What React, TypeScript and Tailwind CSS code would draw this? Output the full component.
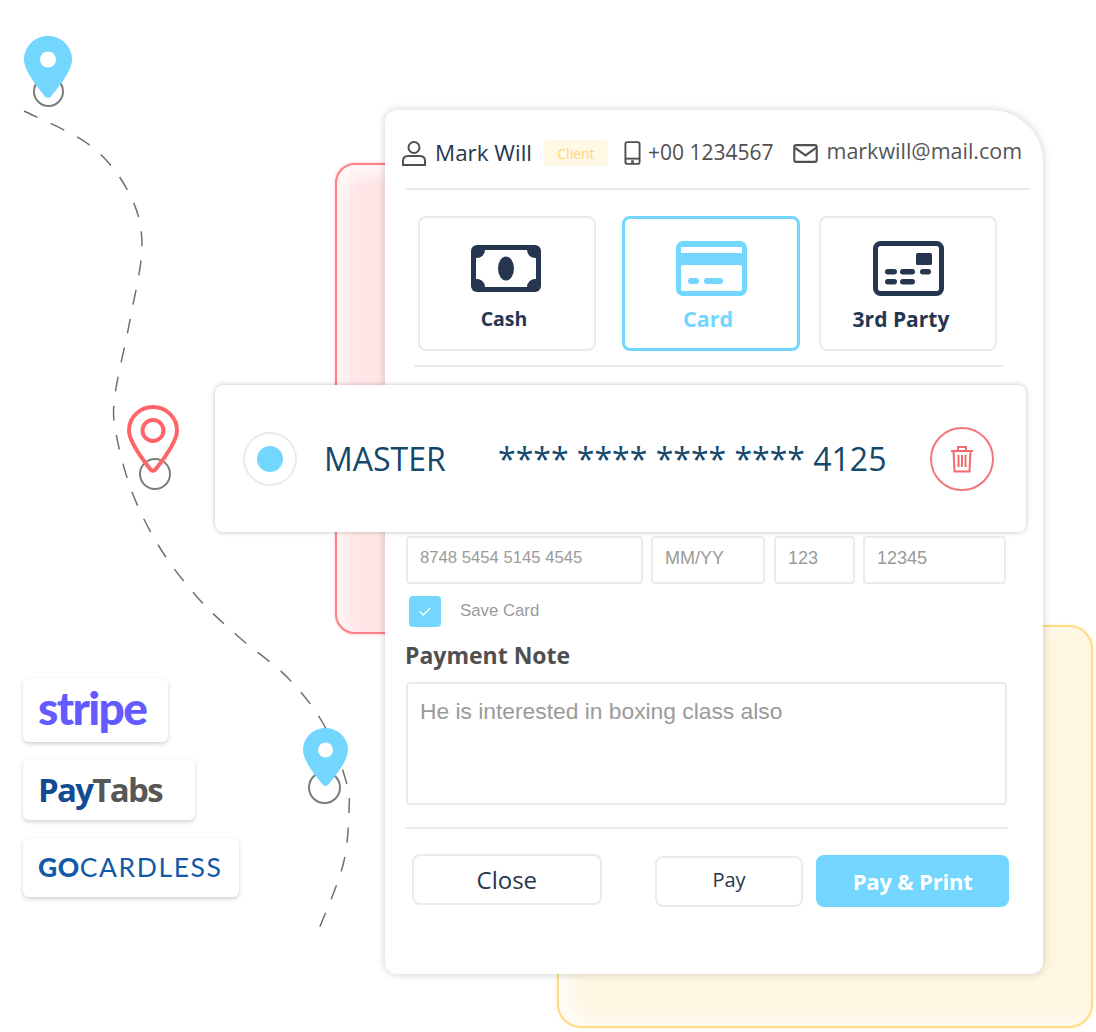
const sans = "font-['Open_Sans','Noto_Sans',sans-serif]";
const arial = "font-['Liberation_Sans',Arial,sans-serif]";

const routePoints: [number, number][] = [
  [24, 111], [91, 146], [129, 193], [142, 245], [130, 320], [115, 395], [116, 433], [132, 492], [160, 548],
  [198, 598], [240, 638], [288, 678], [324, 725], [346, 781], [349, 811], [343, 865], [319, 929],
];

function smoothPath(p: [number, number][]) {
  let d = `M${p[0][0]} ${p[0][1]}`;
  for (let i = 0; i < p.length - 1; i++) {
    const a = p[Math.max(i - 1, 0)];
    const b = p[i];
    const c = p[i + 1];
    const e = p[Math.min(i + 2, p.length - 1)];
    d += `C${b[0] + (c[0] - a[0]) / 6} ${b[1] + (c[1] - a[1]) / 6} ${c[0] - (e[0] - b[0]) / 6} ${c[1] - (e[1] - b[1]) / 6} ${c[0]} ${c[1]}`;
  }
  return d;
}

function Pin({ className, hole }: { className: string; hole: number }) {
  return (
    <svg viewBox="0 0 48 62" className={className}>
      <path fill="#72d6ff" d="M24 0C10.700 0 0 10.500 0 23.600 0 35 14 52 20.800 60.200c1.700 2 4.600 2 6.300 0C34 52 48 35 48 23.600 48 10.500 37.300 0 24 0Z" />
      <circle cx="24" cy="23.500" r={hole} fill="#fff" />
    </svg>
  );
}

function Ring({ className }: { className: string }) {
  return <div className={`absolute rounded-full border-2 border-[#7b7b7b] ${className}`} />;
}

function CashIcon() {
  return (
    <svg viewBox="0 0 70 47" className="h-[47px] w-[70px] -translate-x-[1px]">
      <rect width="70" height="47" rx="6" fill="#26364f" />
      <path fill="#fff" d="M14 5H56A8 8 0 0 0 65 13V34A8 8 0 0 0 56 42H14A8 8 0 0 0 5 34V13A8 8 0 0 0 14 5Z" />
      <ellipse cx="35" cy="23.500" rx="8" ry="12" fill="#26364f" />
    </svg>
  );
}

function CardIcon() {
  return (
    <svg viewBox="0 0 71 55" className="h-[55px] w-[71px]">
      <rect width="71" height="55" rx="7" fill="#72d6ff" />
      <rect x="5" y="6" width="61" height="6" fill="#fff" />
      <rect x="5" y="24" width="61" height="26" rx="2" fill="#fff" />
      <rect x="12" y="37" width="11" height="6" rx="3" fill="#72d6ff" />
      <rect x="28" y="37" width="19" height="6" rx="3" fill="#72d6ff" />
    </svg>
  );
}

function PartyIcon() {
  return (
    <svg viewBox="0 0 71 55" className="h-[55px] w-[71px]">
      <rect x="2.500" y="2.500" width="66" height="50" rx="5" fill="#fff" stroke="#26364f" strokeWidth="5" />
      <rect x="43" y="12" width="16" height="12" rx="1.500" fill="#26364f" />
      <rect x="12" y="28" width="12" height="5.500" rx="2.700" fill="#26364f" />
      <rect x="27" y="28" width="15" height="5.500" rx="2.700" fill="#26364f" />
      <rect x="47" y="28" width="11" height="5.500" rx="2.700" fill="#26364f" />
      <rect x="12" y="38" width="12" height="5.500" rx="2.700" fill="#26364f" />
      <rect x="27" y="38" width="15" height="5.500" rx="2.700" fill="#26364f" />
    </svg>
  );
}

function Method({ label, active, icon, className, labelClass }: { label: string; active?: boolean; icon: React.ReactNode; className: string; labelClass: string }) {
  return (
    <div className={`flex h-[135px] w-[178px] flex-col items-center rounded-lg ${active ? "border-[3px] border-[#72d6ff] pt-[21px]" : "border-2 border-[#ebebeb] pt-[22px]"} ${className}`}>
      <div className="flex h-[56px] items-center">{icon}</div>
      <div className={`leading-[27px] font-bold whitespace-nowrap ${active ? "mt-[8px] text-[#72d6ff]" : "mt-[9px] text-[#26364f]"} ${sans} ${labelClass}`}>{label}</div>
    </div>
  );
}

function Field({ text, className }: { text: string; className: string }) {
  return (
    <div className={`flex h-[48px] items-center rounded border-2 border-[#ebebeb] pb-[4px] pl-[12px] text-[#9a9a9a] ${arial} ${className}`}>{text}</div>
  );
}

export default function App() {
  return (
    <div className="relative h-[1032px] w-[1096px] overflow-hidden bg-white">
      {/* decorative back panels */}
      <div className="absolute left-[335px] top-[163px] h-[471px] w-[200px] rounded-[20px] border-2 border-[#ff8085] bg-[#ffe6e7] shadow-[0_0_3px_rgba(255,120,125,0.5),inset_10px_10px_14px_rgba(255,255,255,0.7)]" />
      <div className="absolute left-[557px] top-[625px] h-[403px] w-[536px] rounded-[24px] border-2 border-[#ffdc85] bg-[#fff6e2] shadow-[0_0_3px_rgba(255,220,133,0.5),inset_14px_-4px_18px_rgba(255,255,255,0.7)]" />

      {/* route */}
      <svg viewBox="0 0 1096 1032" className="absolute inset-0 h-[1032px] w-[1096px]" fill="none">
        <path d={smoothPath(routePoints)} stroke="#6f6f6f" strokeWidth="1.500" strokeDasharray="15 14.500" />
      </svg>
      <Ring className="left-[33px] top-[76px] h-[31px] w-[31px]" />
      <Ring className="left-[139px] top-[458px] h-[32px] w-[32px]" />
      <Ring className="left-[308px] top-[771px] h-[33px] w-[33px]" />
      <Pin className="absolute left-[24px] top-[36px] h-[62px] w-[48px]" hole={8} />
      <svg viewBox="0 0 52 68" className="absolute left-[127px] top-[405px] h-[68px] w-[52px]" fill="none" stroke="#ff6469" strokeWidth="4">
        <path d="M26 2C12.700 2 2 12.600 2 25.500 2 36 16 55 23.500 64.500c1.300 1.600 3.700 1.600 5 0C36 55 50 36 50 25.500 50 12.600 39.300 2 26 2Z" />
        <circle cx="26" cy="25.500" r="10.500" />
      </svg>
      <Pin className="absolute left-[303px] top-[727px] h-[60px] w-[45px]" hole={8} />

      {/* gateway logos */}
      <div className="absolute left-[23px] top-[678px] flex h-[64px] w-[145px] items-center rounded-md bg-white pb-[5px] pl-[15px] shadow-[0_2px_4px_rgba(0,0,0,0.18)]">
        <span className="text-[46px] leading-none font-black tracking-[-1.600px] text-[#635bff] font-['Lato',sans-serif]">stripe</span>
      </div>
      <div className="absolute left-[23px] top-[759px] flex h-[61px] w-[172px] items-center rounded-md bg-white pl-[15px] shadow-[0_2px_4px_rgba(0,0,0,0.18)]">
        <span className="text-[33px] leading-none font-bold tracking-[-1.700px] font-['Open_Sans',sans-serif]">
          <span className="text-[#124b94]">Pay</span>
          <span className="text-[#575757]">Tabs</span>
        </span>
      </div>
      <div className="absolute left-[23px] top-[838px] flex h-[59px] w-[216px] items-center rounded-md bg-white pl-[15px] shadow-[0_2px_4px_rgba(0,0,0,0.18)]">
        <span className="text-[26.500px] leading-none text-[#1359a8] font-['Lato',sans-serif]">
          <span className="font-black tracking-[0.5px]">GO</span>
          <span className="font-normal tracking-[1.600px]">CARDLESS</span>
        </span>
      </div>

      {/* main card */}
      <div className="absolute left-[385px] top-[110px] h-[864px] w-[658px] rounded-xl rounded-tr-[52px] bg-white shadow-[0_0_8px_rgba(0,0,0,0.2)]">
        <div className="ml-[16px] flex h-[78px] items-center pt-[8px]">
          <svg viewBox="0 0 26 26" className="h-[26px] w-[26px]" fill="none" stroke="#4f4f4f" strokeWidth="2">
            <circle cx="13" cy="7.500" r="5.500" />
            <path d="M2 25v-4c0-3 2-5 5-5h12c3 0 5 2 5 5v4Z" />
          </svg>
          <span className={`ml-[8px] text-[22.400px] font-medium text-[#26364f] ${sans}`}>Mark Will</span>
          <span className={`ml-[12px] flex h-[26px] w-[64px] items-center justify-center rounded bg-[#fff8e5] text-[14px] text-[#ffd57e] ${sans}`}>Client</span>
          <svg viewBox="0 0 18 26" className="ml-[16px] h-[26px] w-[17px]" fill="none" stroke="#4f4f4f" strokeWidth="2">
            <rect x="1.500" y="1.500" width="15" height="23" rx="2" />
            <path d="M1.500 19h15" />
            <circle cx="9" cy="22" r=".7" />
          </svg>
          <span className={`ml-[7px] text-[21px] text-[#4f4f4f] ${sans}`}>+00 1234567</span>
          <svg viewBox="0 0 26 20" className="ml-[20px] h-[19px] w-[25px]" fill="none" stroke="#4f4f4f" strokeWidth="2.200">
            <rect x="1.200" y="1.200" width="23.600" height="17.600" rx="2" />
            <path d="M2 4l11 8 11-8" />
          </svg>
          <span className={`ml-[8px] -translate-y-[2px] text-[21.500px] text-[#555] ${sans}`}>markwill@mail.com</span>
        </div>
        <div className="ml-[21px] h-[2px] w-[624px] bg-[#ebebeb]" />

        <div className="ml-[33px] mt-[26px] flex">
          <Method label="Cash" icon={<CashIcon />} className="" labelClass="text-[19.500px] -translate-x-[3px]" />
          <Method label="Card" active icon={<CardIcon />} className="ml-[26px]" labelClass="text-[21.500px] -translate-x-[3px] translate-y-[1px]" />
          <Method label="3rd Party" icon={<PartyIcon />} className="ml-[19px]" labelClass="text-[21px] -translate-x-[7px] translate-y-[1px]" />
        </div>
        <div className="ml-[29px] mt-[14px] h-[2px] w-[590px] bg-[#ebebeb]" />

        <div className="ml-[21px] mt-[169px] flex">
          <Field text="8748 5454 5145 4545" className="w-[237px] text-[16.700px]" />
          <Field text="MM/YY" className="ml-[8px] w-[114px] text-[18px]" />
          <Field text="123" className="ml-[9px] w-[81px] text-[18px]" />
          <Field text="12345" className="ml-[8px] w-[143px] text-[18px]" />
        </div>

        <div className="ml-[24px] mt-[12px] flex items-center">
          <div className="flex h-[31px] w-[32px] items-center justify-center rounded bg-[#72d6ff]">
            <svg viewBox="0 0 16 12" className="h-[11px] w-[14px]" fill="none" stroke="#fff" strokeWidth="1.500">
              <path d="M2 6l4 4 8-8" />
            </svg>
          </div>
          <span className={`ml-[19px] -translate-y-[1px] text-[16.800px] text-[#9a9a9a] ${arial}`}>Save Card</span>
        </div>

        <div className={`ml-[20px] mt-[13px] text-[23px] leading-[30px] font-bold text-[#4f4f4f] ${sans}`}>Payment Note</div>
        <div className={`ml-[21px] mt-[12px] h-[123px] w-[601px] rounded border-2 border-[#ebebeb] pl-[12px] pt-[13px] text-[22.800px] leading-[28px] text-[#9a9a9a] ${arial}`}>
          He is interested in boxing class also
        </div>
        <div className="ml-[20px] mt-[22px] h-[2px] w-[603px] bg-[#ebebeb]" />

        <div className="ml-[27px] mt-[25px] flex w-[597px] items-start">
          <div className={`flex h-[51px] w-[190px] items-center justify-center rounded-lg border-2 border-[#ebebeb] text-[24px] text-[#26364f] ${sans}`}>Close</div>
          <div className={`ml-[53px] mt-[2px] flex h-[51px] w-[149px] items-center justify-center rounded-lg border-2 border-[#ebebeb] pb-[3px] text-[20px] font-medium text-[#26364f] ${sans}`}>Pay</div>
          <div className={`ml-[13px] mt-[1px] flex h-[52px] w-[193px] items-center justify-center rounded-lg bg-[#72d6ff] text-[22px] font-bold tracking-[-0.2px] text-white ${sans}`}>Pay &amp; Print</div>
        </div>
      </div>

      {/* saved card overlay */}
      <div className="absolute left-[215px] top-[385px] flex h-[147px] w-[811px] items-center rounded-lg bg-white shadow-[0_0_5px_rgba(0,0,0,0.25)]">
        <div className="ml-[28px] flex h-[54px] w-[54px] items-center justify-center rounded-full border-2 border-[#ebebeb]">
          <div className="h-[26px] w-[26px] rounded-full bg-[#72d6ff]" />
        </div>
        <span className={`ml-[27px] w-[174px] text-[32px] leading-none text-[#14486b] ${sans}`}>MASTER</span>
        <span className={`text-[32px] leading-none whitespace-nowrap text-[#14486b] ${sans}`}>**** **** **** **** 4125</span>
        <div className="ml-auto mr-[32px] flex h-[64px] w-[64px] items-center justify-center rounded-full border-2 border-[#f2777b]">
          <svg viewBox="0 0 24 28" className="h-[28px] w-[24px]" fill="none" stroke="#f2686d" strokeWidth="2">
            <path d="M1 6h22M8 6V2h8v4M3.500 6l1 20.500h15L20.500 6M8.500 10v12M12 10v12M15.500 10v12" />
          </svg>
        </div>
      </div>
    </div>
  );
}
